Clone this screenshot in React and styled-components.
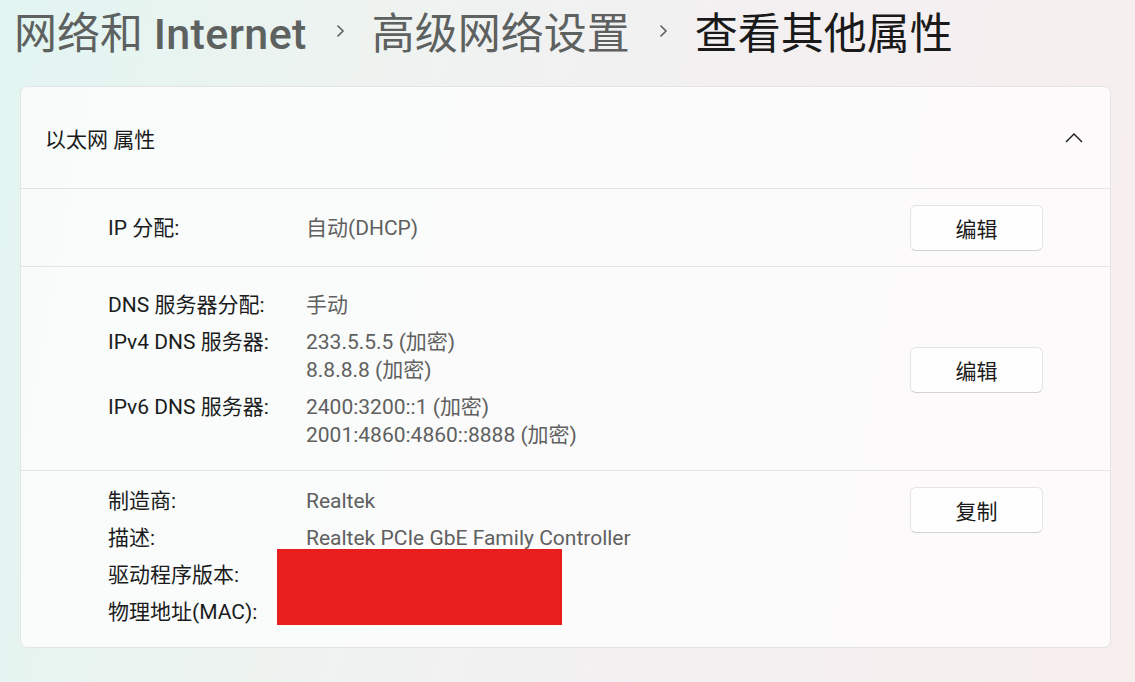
import React from "react";
import styled, { createGlobalStyle } from "styled-components";

const Global = createGlobalStyle`
  html, body { margin: 0; padding: 0; }
  body {
    width: 1135px;
    height: 682px;
    overflow: hidden;
    font-family: Roboto, "Noto Sans CJK SC", sans-serif;
    background: linear-gradient(100deg, #e2f5f1 0%, #eef3f0 30%, #f3f0f2 60%, #f7eeee 100%);
  }
`;

const Page = styled.div`
  display: flex;
  flex-direction: column;
  height: 682px;
`;

const Breadcrumb = styled.h1`
  display: flex;
  align-items: center;
  height: 60px;
  margin: 0 0 26px 0;
  padding-left: 14px;
  font-size: 43px;
  font-weight: 400;
  white-space: nowrap;
`;

const Crumb = styled.span`
  color: ${(p) => (p.$current ? "#1a1a1a" : "#5d615f")};
`;

const Latin = styled.span`
  font-weight: 500;
  letter-spacing: 0.4px;
`;

const Sep = styled.svg`
  width: 9px;
  height: 14px;
  margin: 2px 27px 0 29px;
  flex: none;
`;

const Card = styled.section`
  margin: 0 24px 0 20px;
  border: 1px solid #e4e4e4;
  border-radius: 7px;
  background: rgba(255, 255, 255, 0.7);
  font-size: 21px;
`;

const Header = styled.div`
  display: flex;
  align-items: center;
  justify-content: space-between;
  height: 101px;
  padding: 0 27px 0 24px;
  color: #1a1a1a;
`;

const Row = styled.div`
  position: relative;
  display: flex;
  align-items: ${(p) => (p.$top ? "flex-start" : "center")};
  min-height: ${(p) => p.$minH || 0}px;
  padding: ${(p) => p.$pad || "0"};
  padding-left: 87px;
  padding-right: 67px;
  border-top: 1px solid #e4e4e4;
`;

const Props = styled.dl`
  flex: 1;
  display: grid;
  grid-template-columns: 198px 1fr;
  row-gap: 9px;
  margin: 0;
  line-height: 28px;
`;

const Label = styled.dt`
  margin: 0;
  color: #1b1b1b;
`;

const Value = styled.dd`
  margin: 0;
  color: #606060;
  white-space: nowrap;
`;

const Line = styled.div``;

const Button = styled.button`
  flex: none;
  width: 133px;
  height: 46px;
  border: 1px solid #e5e5e5;
  border-bottom-color: #d2d2d2;
  border-radius: 6px;
  background: #fefefe;
  color: #1a1a1a;
  font-family: inherit;
  font-size: 21px;
  padding: 0;
`;

const Redact = styled.div`
  position: absolute;
  left: 256px;
  top: 78px;
  width: 285px;
  height: 76px;
  background: #e81d1e;
`;

const Chevron = () => (
  <Sep viewBox="0 0 9 14">
    <path d="M1.5 1.5 L7 7 L1.5 12.5" fill="none" stroke="#5d615f" strokeWidth="1.6" />
  </Sep>
);

const UpIcon = () => (
  <svg width="18" height="10" viewBox="0 0 18 10">
    <path d="M1 9 L9 1 L17 9" fill="none" stroke="#1a1a1a" strokeWidth="1.4" />
  </svg>
);

export default function App() {
  return (
    <Page>
      <Global />
      <Breadcrumb>
        <Crumb>
          网络和 <Latin>Internet</Latin>
        </Crumb>
        <Chevron />
        <Crumb>高级网络设置</Crumb>
        <Chevron />
        <Crumb $current>查看其他属性</Crumb>
      </Breadcrumb>
      <Card>
        <Header>
          <span>以太网 属性</span>
          <UpIcon />
        </Header>
        <Row $minH={77}>
          <Props>
            <Label>IP 分配:</Label>
            <Value>自动(DHCP)</Value>
          </Props>
          <Button>编辑</Button>
        </Row>
        <Row $pad="24px 0 21px">
          <Props>
            <Label>DNS 服务器分配:</Label>
            <Value>手动</Value>
            <Label>IPv4 DNS 服务器:</Label>
            <Value>
              <Line>233.5.5.5 (加密)</Line>
              <Line>8.8.8.8 (加密)</Line>
            </Value>
            <Label>IPv6 DNS 服务器:</Label>
            <Value>
              <Line>2400:3200::1 (加密)</Line>
              <Line>2001:4860:4860::8888 (加密)</Line>
            </Value>
          </Props>
          <Button>编辑</Button>
        </Row>
        <Row $top $pad="16px 0 21px">
          <Props>
            <Label>制造商:</Label>
            <Value>Realtek</Value>
            <Label>描述:</Label>
            <Value>Realtek PCIe GbE Family Controller</Value>
            <Label>驱动程序版本:</Label>
            <Value></Value>
            <Label>物理地址(MAC):</Label>
            <Value></Value>
          </Props>
          <Button>复制</Button>
          <Redact />
        </Row>
      </Card>
    </Page>
  );
}
